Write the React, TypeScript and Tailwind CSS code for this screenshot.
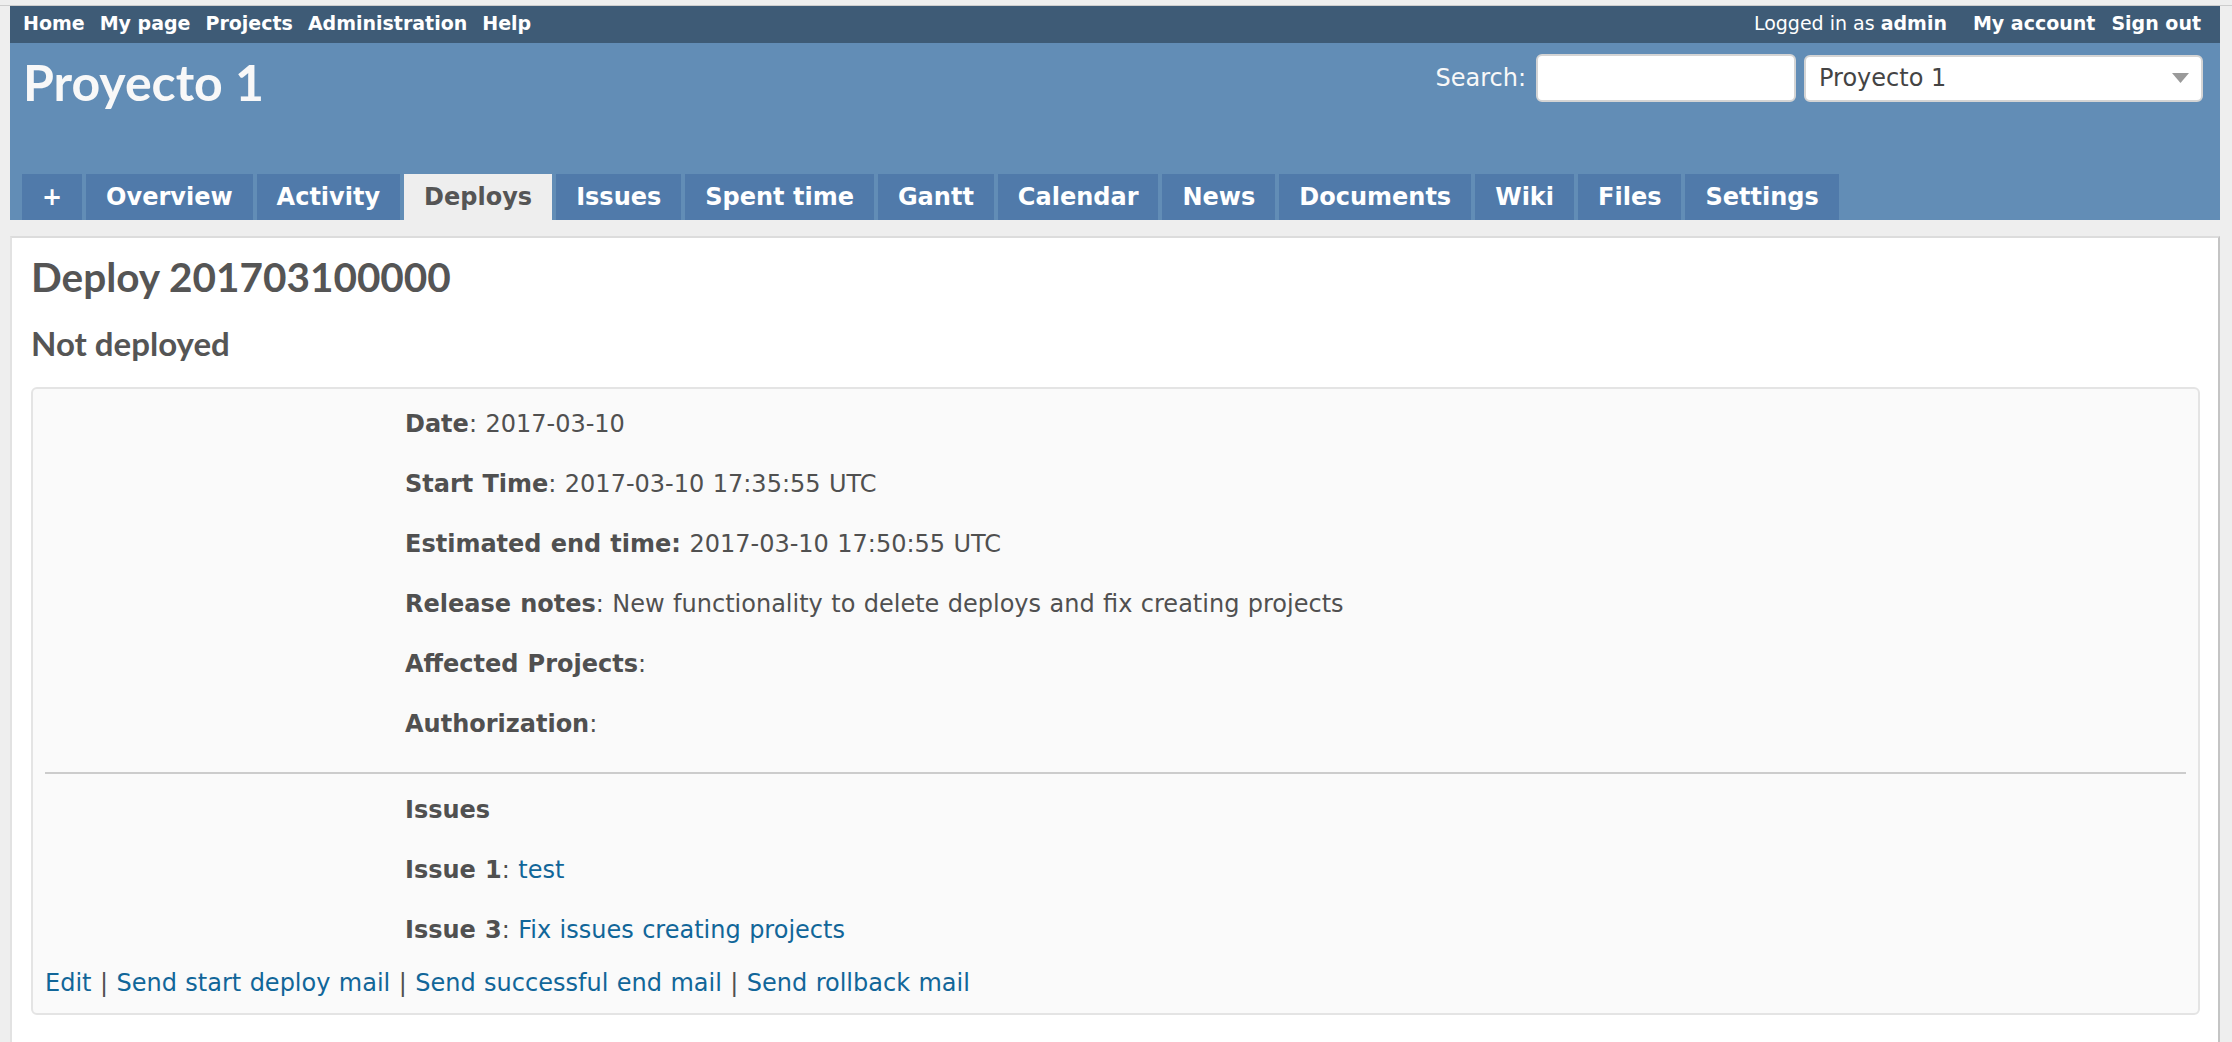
import React from 'react';

const tabs = ['+', 'Overview', 'Activity', 'Deploys', 'Issues', 'Spent time', 'Gantt', 'Calendar', 'News', 'Documents', 'Wiki', 'Files', 'Settings'];

const fields: { label: string; value: string; boldColon?: boolean }[] = [
  { label: 'Date', value: '2017-03-10' },
  { label: 'Start Time', value: '2017-03-10 17:35:55 UTC' },
  { label: 'Estimated end time', value: '2017-03-10 17:50:55 UTC', boldColon: true },
  { label: 'Release notes', value: 'New functionality to delete deploys and fix creating projects' },
  { label: 'Affected Projects', value: '' },
  { label: 'Authorization', value: '' },
];

export default function App() {
  return (
    <div className="min-h-screen bg-[#eee] font-['DejaVu_Sans',Verdana,sans-serif]">
      <div className="h-[5px]" />
      <div className="h-px bg-[#cdcdcd]" />
      <div className="pl-[10px] pr-[12px]">
        {/* TOP MENU */}
        <div className="h-[37px] bg-[#3e5b76] flex items-center justify-between pl-[13px] pr-[19px] pb-[2px] text-[19px] text-white">
          <div className="flex items-center gap-[15px] font-bold">
            <span>Home</span>
            <span>My page</span>
            <span>Projects</span>
            <span>Administration</span>
            <span>Help</span>
          </div>
          <div className="flex items-center">
            <span>
              Logged in as <span className="font-bold">admin</span>
            </span>
            <span className="font-bold ml-[26px]">My account</span>
            <span className="font-bold ml-[16px]">Sign out</span>
          </div>
        </div>

        {/* HEADER */}
        <div className="h-[177px] bg-[#628db6] flex flex-col justify-between">
          <div className="flex justify-between items-start pl-[13px] pr-[17px]">
            <h1 className="pt-[15px] text-[50px] leading-[49px] font-bold text-[#f8f8f8] font-['Lato',sans-serif]">
              Proyecto 1
            </h1>
            <div className="flex items-center pt-[11px]">
              <span className="text-[24px] text-[#f8f8f8] mr-[10px]">Search:</span>
              <div className="w-[260px] h-[48px] bg-white border-2 border-[#d4d4d4] rounded-[6px]" />
              <div className="ml-[8px] w-[399px] h-[47px] bg-white border-2 border-[#d4d4d4] rounded-[6px] flex items-center justify-between pl-[13px] pr-[12px]">
                <span className="text-[24px] text-[#444]">Proyecto 1</span>
                <svg width="17" height="10" viewBox="0 0 17 10">
                  <polygon points="0,0 17,0 8.5,10" fill="#9a9a9a" />
                </svg>
              </div>
            </div>
          </div>
          <div className="flex gap-[4px] pl-[12px]">
            {tabs.map((t) => (
              <div
                key={t}
                className={
                  t === 'Deploys'
                    ? 'h-[46px] px-[20px] flex items-center text-[24px] font-bold bg-[#eee] text-[#555]'
                    : 'h-[46px] px-[20px] flex items-center text-[24px] font-bold bg-[#507aaa] text-white'
                }
              >
                {t}
              </div>
            ))}
          </div>
        </div>

        {/* MAIN */}
        <div className="pt-[16px]">
          <div className="bg-white border-t-2 border-l-2 border-r-2 border-t-[#dcdcdc] border-l-[#e2e2e2] border-r-[#c4c4c4] pl-[19px] pr-[18px] pt-[15px] pb-[40px]">
            <h2 className="text-[40.5px] leading-[48px] font-bold text-[#555] font-['Lato',sans-serif]">
              Deploy 201703100000
            </h2>
            <h3 className="mt-[22px] text-[33px] leading-[40px] font-bold text-[#555] font-['Lato',sans-serif]">
              Not deployed
            </h3>
            <div className="mt-[24px] bg-[#fafafa] border-2 border-[#e4e4e4] rounded-[6px] p-[12px] text-[24px] leading-[36px] text-[#505050] [word-spacing:0.8px]">
              {fields.map((f) => (
                <p key={f.label} className="pl-[360px] pt-[5px] pb-[19px]">
                  {f.boldColon ? (
                    <span className="font-bold">{f.label}:</span>
                  ) : (
                    <>
                      <span className="font-bold">{f.label}</span>:
                    </>
                  )}
                  {f.value ? ' ' + f.value : ''}
                </p>
              ))}
              <div className="mt-[11px] h-[2px] bg-[#cccccc]" />
              <p className="pl-[360px] pt-[18px] pb-[19px] font-bold">Issues</p>
              <p className="pl-[360px] pt-[5px] pb-[19px]">
                <span className="font-bold">Issue 1</span>: <span className="text-[#169]">test</span>
              </p>
              <p className="pl-[360px] pt-[5px] pb-[17px]">
                <span className="font-bold">Issue 3</span>: <span className="text-[#169]">Fix issues creating projects</span>
              </p>
              <p>
                <span className="text-[#169]">Edit</span> | <span className="text-[#169]">Send start deploy mail</span> |{' '}
                <span className="text-[#169]">Send successful end mail</span> | <span className="text-[#169]">Send rollback mail</span>
              </p>
            </div>
          </div>
        </div>
      </div>
    </div>
  );
}
